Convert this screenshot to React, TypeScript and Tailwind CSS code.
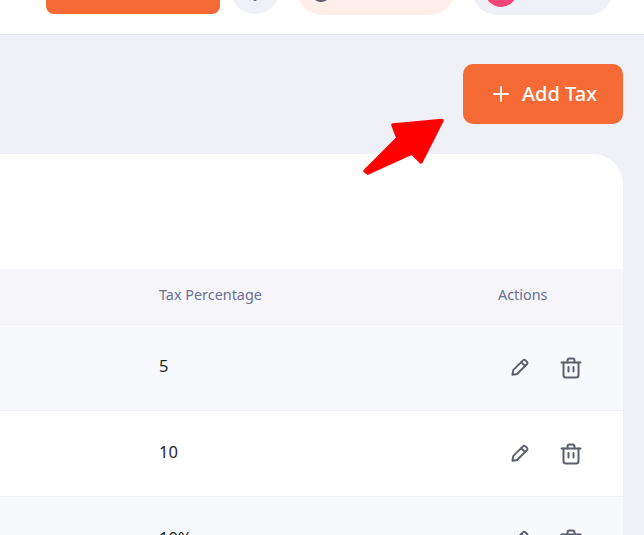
import React from "react";

const font = "font-['Noto_Sans','Open_Sans',sans-serif]";

function PencilIcon() {
  return (
    <svg width="20" height="20" viewBox="0 0 20 20" fill="none" stroke="#5c5f6c" strokeWidth="1.9" strokeLinejoin="round" strokeLinecap="round">
      <path d="M2.4 17.8 L3.2 13.1 L13.2 3.1 Q14.2 2.2 15.2 3.1 L17.1 5 Q18 6 17.1 7 L7.1 17 Z" />
      <path d="M11.2 5.1 L15.1 9" />
    </svg>
  );
}

function TrashIcon() {
  return (
    <svg width="22" height="22" viewBox="0 0 22 22" fill="none" stroke="#5c5f6c" strokeWidth="2" strokeLinejoin="round" strokeLinecap="round">
      <path d="M1.5 5.5 H20.5" />
      <path d="M3.5 5.5 V18 Q3.5 20.5 6 20.5 H16 Q18.5 20.5 18.5 18 V5.5" />
      <path d="M7.5 5.5 V3.5 Q7.5 1.5 9.5 1.5 H12.5 Q14.5 1.5 14.5 3.5 V5.5" />
      <path d="M8.5 10 V14.5" />
      <path d="M13.5 10 V14.5" />
    </svg>
  );
}

function ArrowMark() {
  return (
    <svg width="84" height="60" viewBox="0 0 84 60" fill="#ff0000" stroke="#ff0000" strokeWidth="3.5" strokeLinejoin="round">
      <path d="M31 9 L80 4.5 L59 46 L50 37 L6 57 L3 55 L36 22 Z" />
    </svg>
  );
}

function Row({ value, striped }: { value: string; striped?: boolean }) {
  return (
    <div className={["flex h-[86px] border-b border-[#f0f0f6]", striped ? "bg-[#f8f9fc]" : "bg-white"].join(" ")}>
      <div className="w-[159px] shrink-0" />
      <div className="flex-1 pt-[30px] text-[16.5px] leading-[22px] text-[#212529]">{value}</div>
      <div className="flex w-[115px] shrink-0 items-start gap-[30px] pt-[32px] pl-[2px]">
        <PencilIcon />
        <TrashIcon />
      </div>
    </div>
  );
}

export default function App() {
  return (
    <div className={`${font} h-[535px] w-[644px] overflow-hidden bg-[#f0f1f6]`}>
      <header className="flex h-[35px] items-start overflow-hidden border-b border-[#dfe1e6] bg-white">
        <div className="ml-[46px] h-[14px] w-[174px] rounded-b-[8px] bg-[#f66a35]" />
        <div className="ml-[10px] -mt-[36px] flex h-[50px] w-[50px] items-end justify-center rounded-full bg-[#f0f1f6] pb-[13px]">
          <div className="h-[4px] w-[4px] rounded-full bg-[#5c5f6c]" />
        </div>
        <div className="ml-[17px] -mt-[35px] flex h-[50px] w-[158px] items-end rounded-[25px] bg-[#ffeee9] pb-[13px] pl-[14px]">
          <div className="h-[20px] w-[20px] rounded-full bg-[#5c5f6c]" />
        </div>
        <div className="ml-[17px] -mt-[35px] flex h-[50px] w-[141px] items-end rounded-[25px] bg-[#f0f1f6] pb-[8px] pl-[13px]">
          <div className="h-[32px] w-[32px] rounded-full bg-[#f7457b]" />
        </div>
      </header>

      <div className="relative flex justify-end pt-[29px] pr-[21px]">
        <button className="flex h-[60px] w-[160px] items-center justify-start gap-[13px] rounded-[10px] bg-[#f66a35] pb-[1px] pl-[30px] text-[20px] font-medium text-white">
          <svg width="16" height="16" viewBox="0 0 16 16" stroke="#ffffff" strokeWidth="1.8" strokeLinecap="round">
            <path d="M8 1 V15 M1 8 H15" />
          </svg>
          <span>Add Tax</span>
        </button>
        <div className="absolute left-[362px] top-[81px] z-10">
          <ArrowMark />
        </div>
      </div>

      <main className="mt-[30px] mr-[21px] h-[400px] overflow-hidden rounded-tr-[30px] bg-white">
        <div className="h-[115px]" />
        <div className="flex h-[56px] items-center border-b border-[#f0f0f6] bg-[#f5f5fa] pb-[4px] text-[14.4px] text-[#6c6f93]">
          <div className="w-[159px] shrink-0" />
          <div className="flex-1">Tax Percentage</div>
          <div className="w-[125px] shrink-0">Actions</div>
        </div>
        <Row value="5" striped />
        <Row value="10" />
        <Row value="10%" striped />
      </main>
    </div>
  );
}
